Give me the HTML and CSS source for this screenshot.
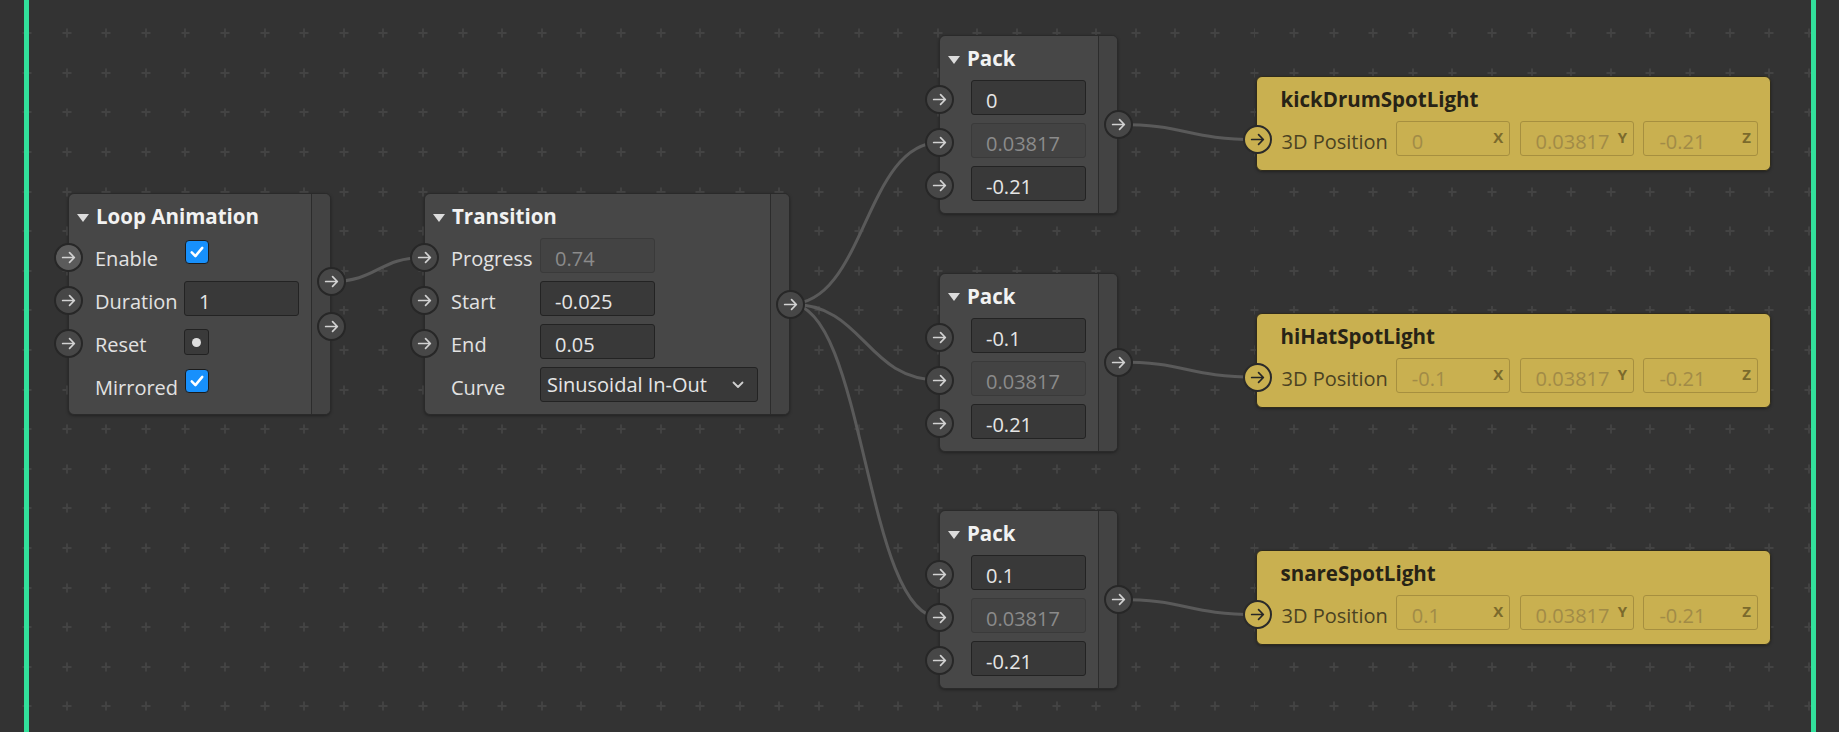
FILE: index.html
```html
<!DOCTYPE html>
<html lang="en">
<head>
    <meta charset="UTF-8">
    <title>Spotlight Graph</title>
    <link rel="stylesheet" href="styles.css">
</head>
<body>
    <svg class="defs">
        <symbol id="arrow" viewBox="0 0 16 16">
            <path d="M2.5 8h11M9 3.5l4.5 4.5-4.5 4.5" fill="none" stroke="currentColor" stroke-width="1.6" stroke-linecap="round" stroke-linejoin="round"/>
        </symbol>
        <symbol id="tick" viewBox="0 0 14 14">
            <path d="M2.4 7.4l3.2 3.2 6-7.2" fill="none" stroke="currentColor" stroke-width="2.2" stroke-linecap="round" stroke-linejoin="round"/>
        </symbol>
    </svg>

    <div class="graph">
        <svg class="wires" width="1839" height="732">
            <path d="M331 281.5 C378 281.5 378 257.5 424.5 257.5"/>
            <path d="M790 304 C865 304 865 142.5 939.5 142.5"/>
            <path d="M790 304 C865 304 865 380 939.5 380"/>
            <path d="M790 304 C865 304 865 617.5 939.5 617.5"/>
            <path d="M1118 124.5 C1187 124.5 1187 139.5 1257 139.5"/>
            <path d="M1118 362 C1187 362 1187 377 1257 377"/>
            <path d="M1118 599.5 C1187 599.5 1187 614.5 1257 614.5"/>
        </svg>

        <!-- Loop Animation -->
        <div class="node loop">
            <div class="main">
                <div class="title"><span class="caret"></span>Loop Animation</div>
                <div class="row">
                    <span class="port hover"><svg><use href="#arrow"/></svg></span>
                    <span class="label">Enable</span>
                    <span class="check"><svg><use href="#tick"/></svg></span>
                </div>
                <div class="row">
                    <span class="port"><svg><use href="#arrow"/></svg></span>
                    <span class="label">Duration</span>
                    <div class="field">1</div>
                </div>
                <div class="row">
                    <span class="port"><svg><use href="#arrow"/></svg></span>
                    <span class="label">Reset</span>
                    <span class="bang"></span>
                </div>
                <div class="row">
                    <span class="label">Mirrored</span>
                    <span class="check"><svg><use href="#tick"/></svg></span>
                </div>
            </div>
            <div class="side">
                <span class="port"><svg><use href="#arrow"/></svg></span>
                <span class="port"><svg><use href="#arrow"/></svg></span>
            </div>
        </div>

        <!-- Transition -->
        <div class="node transition">
            <div class="main">
                <div class="title"><span class="caret"></span>Transition</div>
                <div class="row">
                    <span class="port"><svg><use href="#arrow"/></svg></span>
                    <span class="label">Progress</span>
                    <div class="field off">0.74</div>
                </div>
                <div class="row">
                    <span class="port"><svg><use href="#arrow"/></svg></span>
                    <span class="label">Start</span>
                    <div class="field">-0.025</div>
                </div>
                <div class="row">
                    <span class="port"><svg><use href="#arrow"/></svg></span>
                    <span class="label">End</span>
                    <div class="field">0.05</div>
                </div>
                <div class="row">
                    <span class="label">Curve</span>
                    <div class="select">
                        <span>Sinusoidal In-Out</span>
                        <svg width="12" height="8" viewBox="0 0 12 8"><path d="M1.5 1.5l4.5 4.5 4.5-4.5" fill="none" stroke="currentColor" stroke-width="1.8" stroke-linecap="round" stroke-linejoin="round"/></svg>
                    </div>
                </div>
            </div>
            <div class="side">
                <span class="port"><svg><use href="#arrow"/></svg></span>
            </div>
        </div>

        <!-- Packs -->
        <div class="node pack pack-1">
            <div class="main">
                <div class="title"><span class="caret"></span>Pack</div>
                <div class="row">
                    <span class="port"><svg><use href="#arrow"/></svg></span>
                    <div class="field">0</div>
                </div>
                <div class="row">
                    <span class="port"><svg><use href="#arrow"/></svg></span>
                    <div class="field off">0.03817</div>
                </div>
                <div class="row">
                    <span class="port"><svg><use href="#arrow"/></svg></span>
                    <div class="field">-0.21</div>
                </div>
            </div>
            <div class="side">
                <span class="port"><svg><use href="#arrow"/></svg></span>
            </div>
        </div>

        <div class="node pack pack-2">
            <div class="main">
                <div class="title"><span class="caret"></span>Pack</div>
                <div class="row">
                    <span class="port"><svg><use href="#arrow"/></svg></span>
                    <div class="field">-0.1</div>
                </div>
                <div class="row">
                    <span class="port"><svg><use href="#arrow"/></svg></span>
                    <div class="field off">0.03817</div>
                </div>
                <div class="row">
                    <span class="port"><svg><use href="#arrow"/></svg></span>
                    <div class="field">-0.21</div>
                </div>
            </div>
            <div class="side">
                <span class="port"><svg><use href="#arrow"/></svg></span>
            </div>
        </div>

        <div class="node pack pack-3">
            <div class="main">
                <div class="title"><span class="caret"></span>Pack</div>
                <div class="row">
                    <span class="port"><svg><use href="#arrow"/></svg></span>
                    <div class="field">0.1</div>
                </div>
                <div class="row">
                    <span class="port"><svg><use href="#arrow"/></svg></span>
                    <div class="field off">0.03817</div>
                </div>
                <div class="row">
                    <span class="port"><svg><use href="#arrow"/></svg></span>
                    <div class="field">-0.21</div>
                </div>
            </div>
            <div class="side">
                <span class="port"><svg><use href="#arrow"/></svg></span>
            </div>
        </div>

        <!-- Spotlights -->
        <div class="node spot spot-1">
            <div class="main">
                <div class="title">kickDrumSpotLight</div>
                <div class="row">
                    <span class="port"><svg><use href="#arrow"/></svg></span>
                    <span class="label">3D Position</span>
                    <div class="axis"><span>0</span><b>X</b></div>
                    <div class="axis"><span>0.03817</span><b>Y</b></div>
                    <div class="axis"><span>-0.21</span><b>Z</b></div>
                </div>
            </div>
        </div>

        <div class="node spot spot-2">
            <div class="main">
                <div class="title">hiHatSpotLight</div>
                <div class="row">
                    <span class="port"><svg><use href="#arrow"/></svg></span>
                    <span class="label">3D Position</span>
                    <div class="axis"><span>-0.1</span><b>X</b></div>
                    <div class="axis"><span>0.03817</span><b>Y</b></div>
                    <div class="axis"><span>-0.21</span><b>Z</b></div>
                </div>
            </div>
        </div>

        <div class="node spot spot-3">
            <div class="main">
                <div class="title">snareSpotLight</div>
                <div class="row">
                    <span class="port"><svg><use href="#arrow"/></svg></span>
                    <span class="label">3D Position</span>
                    <div class="axis"><span>0.1</span><b>X</b></div>
                    <div class="axis"><span>0.03817</span><b>Y</b></div>
                    <div class="axis"><span>-0.21</span><b>Z</b></div>
                </div>
            </div>
        </div>

        <div class="frame"></div>
    </div>
</body>
</html>
```

FILE: styles.css
```css
body {
    margin: 0;
    overflow: hidden;
    font-family: "Open Sans", "Noto Sans", sans-serif;
    font-size: 20px;
    color: #e2e2e2;
    background-color: #333333;
    background-image: url("data:image/svg+xml,%3Csvg xmlns='http://www.w3.org/2000/svg' width='40' height='40'%3E%3Cpath d='M20 15.5v9M15.5 20h9' stroke='%23434343' stroke-width='1.8'/%3E%3C/svg%3E");
    background-size: 39.6px 39.6px;
    background-position: 46.9px 13.5px;
}
.defs {
    position: absolute;
    width: 0;
    height: 0;
}
.graph {
    position: relative;
    width: 1839px;
    height: 732px;
}
.wires {
    position: absolute;
    left: 0;
    top: 0;
}
.wires path {
    fill: none;
    stroke: #5a5a5a;
    stroke-width: 3;
}
.frame {
    position: absolute;
    left: 24px;
    top: 0;
    width: 1782px;
    height: 732px;
    border-left: 5px solid #32e09b;
    border-right: 5px solid #32e09b;
    pointer-events: none;
}

/* nodes */
.node {
    position: absolute;
    display: flex;
    box-sizing: border-box;
    background: #474747;
    border: 1px solid #2a2a2a;
    border-radius: 6px;
    box-shadow: 0 1px 3px rgba(0,0,0,0.35);
}
.loop { left: 68px; top: 193px; width: 263px; }
.transition { left: 424px; top: 193px; width: 366px; }
.pack { left: 939px; width: 179px; }
.pack-1 { top: 35px; }
.pack-2 { top: 272.5px; }
.pack-3 { top: 510px; }
.spot { left: 1255.5px; width: 515px; }
.spot-1 { top: 75.5px; }
.spot-2 { top: 313px; }
.spot-3 { top: 550px; }

.main {
    flex: 1;
    padding-bottom: 4px;
}
.side {
    width: 18px;
    display: flex;
    flex-direction: column;
    justify-content: center;
    align-items: flex-end;
    gap: 16px;
    background: #434343;
    border-left: 1px solid #2c2c2c;
    border-radius: 0 5px 5px 0;
}
.side .port {
    margin-right: -15.5px;
}
.title {
    display: flex;
    align-items: center;
    height: 44px;
    line-height: 44px;
    padding-left: 8px;
    font-size: 20.5px;
    font-weight: 700;
    color: #f2f2f2;
    white-space: nowrap;
}
.caret {
    width: 0;
    height: 0;
    margin: 3px 7px 0 0;
    border-left: 6.5px solid transparent;
    border-right: 6.5px solid transparent;
    border-top: 8.5px solid #dcdcdc;
}
.row {
    position: relative;
    display: flex;
    align-items: flex-start;
    height: 43px;
    padding-left: 26px;
}
.label {
    width: 89px;
    line-height: 41px;
    white-space: nowrap;
}

/* ports */
.port {
    display: grid;
    place-items: center;
    box-sizing: border-box;
    width: 29px;
    height: 29px;
    border-radius: 50%;
    background: #474747;
    border: 2px solid #272727;
    color: #d2d2d2;
    z-index: 1;
}
.port svg {
    width: 17px;
    height: 17px;
}
.port.hover {
    background: #5b5b5b;
}
.row .port {
    position: absolute;
    left: -15px;
    top: 5px;
}

/* controls */
.field {
    box-sizing: border-box;
    width: 115px;
    height: 35px;
    padding: 7px 14px 0;
    line-height: 26px;
    background: #393939;
    border: 1px solid #232323;
    border-radius: 3px;
    color: #e6e6e6;
    white-space: nowrap;
}
.field.off {
    background: #434343;
    border-color: #3a3a3a;
    color: #8b8b8b;
}
.check {
    display: grid;
    place-items: center;
    box-sizing: border-box;
    width: 24px;
    height: 24px;
    margin: 2px 0 0 1px;
    background: #1790fc;
    border: 1.5px solid #1c1c1c;
    border-radius: 4px;
    color: #fff;
}
.check svg {
    width: 16px;
    height: 16px;
}
.bang {
    display: grid;
    place-items: center;
    box-sizing: border-box;
    width: 25px;
    height: 26px;
    margin-top: 5px;
    background: #3a3a3a;
    border: 1px solid #222;
    border-radius: 3px;
}
.bang::after {
    content: "";
    width: 9px;
    height: 9px;
    border-radius: 50%;
    background: #dedede;
}
.select {
    display: flex;
    align-items: center;
    justify-content: space-between;
    box-sizing: border-box;
    width: 218px;
    height: 35px;
    padding: 0 13px 0 6px;
    line-height: 26px;
    background: #393939;
    border: 1px solid #232323;
    border-radius: 3px;
    color: #e6e6e6;
    white-space: nowrap;
}
.select svg {
    color: #cfcfcf;
}

/* packs */
.pack .row {
    padding-left: 31px;
}

/* spotlight nodes */
.spot {
    background: #c9b050;
    border-color: #2f2b1c;
}
.spot .main {
    padding-bottom: 13px;
}
.spot .title {
    padding-left: 24px;
    color: #272316;
}
.spot .row {
    height: 36px;
    gap: 9.3px;
    padding-left: 25px;
}
.spot .label {
    width: 105px;
    color: #4b4222;
}
.spot .port {
    left: -14px;
    top: 4.5px;
    background: #c9b050;
    border-color: #2a2a2a;
    color: #262626;
}
.axis {
    display: flex;
    justify-content: space-between;
    box-sizing: border-box;
    width: 114.5px;
    height: 35px;
    padding: 7px 6px 0 15px;
    line-height: 26px;
    border: 1.5px solid #a68f3f;
    border-radius: 3px;
    color: #a18b47;
    white-space: nowrap;
}
.axis b {
    margin-top: 1px;
    font-size: 15px;
    line-height: 15px;
    color: #7b6a2c;
}
```
